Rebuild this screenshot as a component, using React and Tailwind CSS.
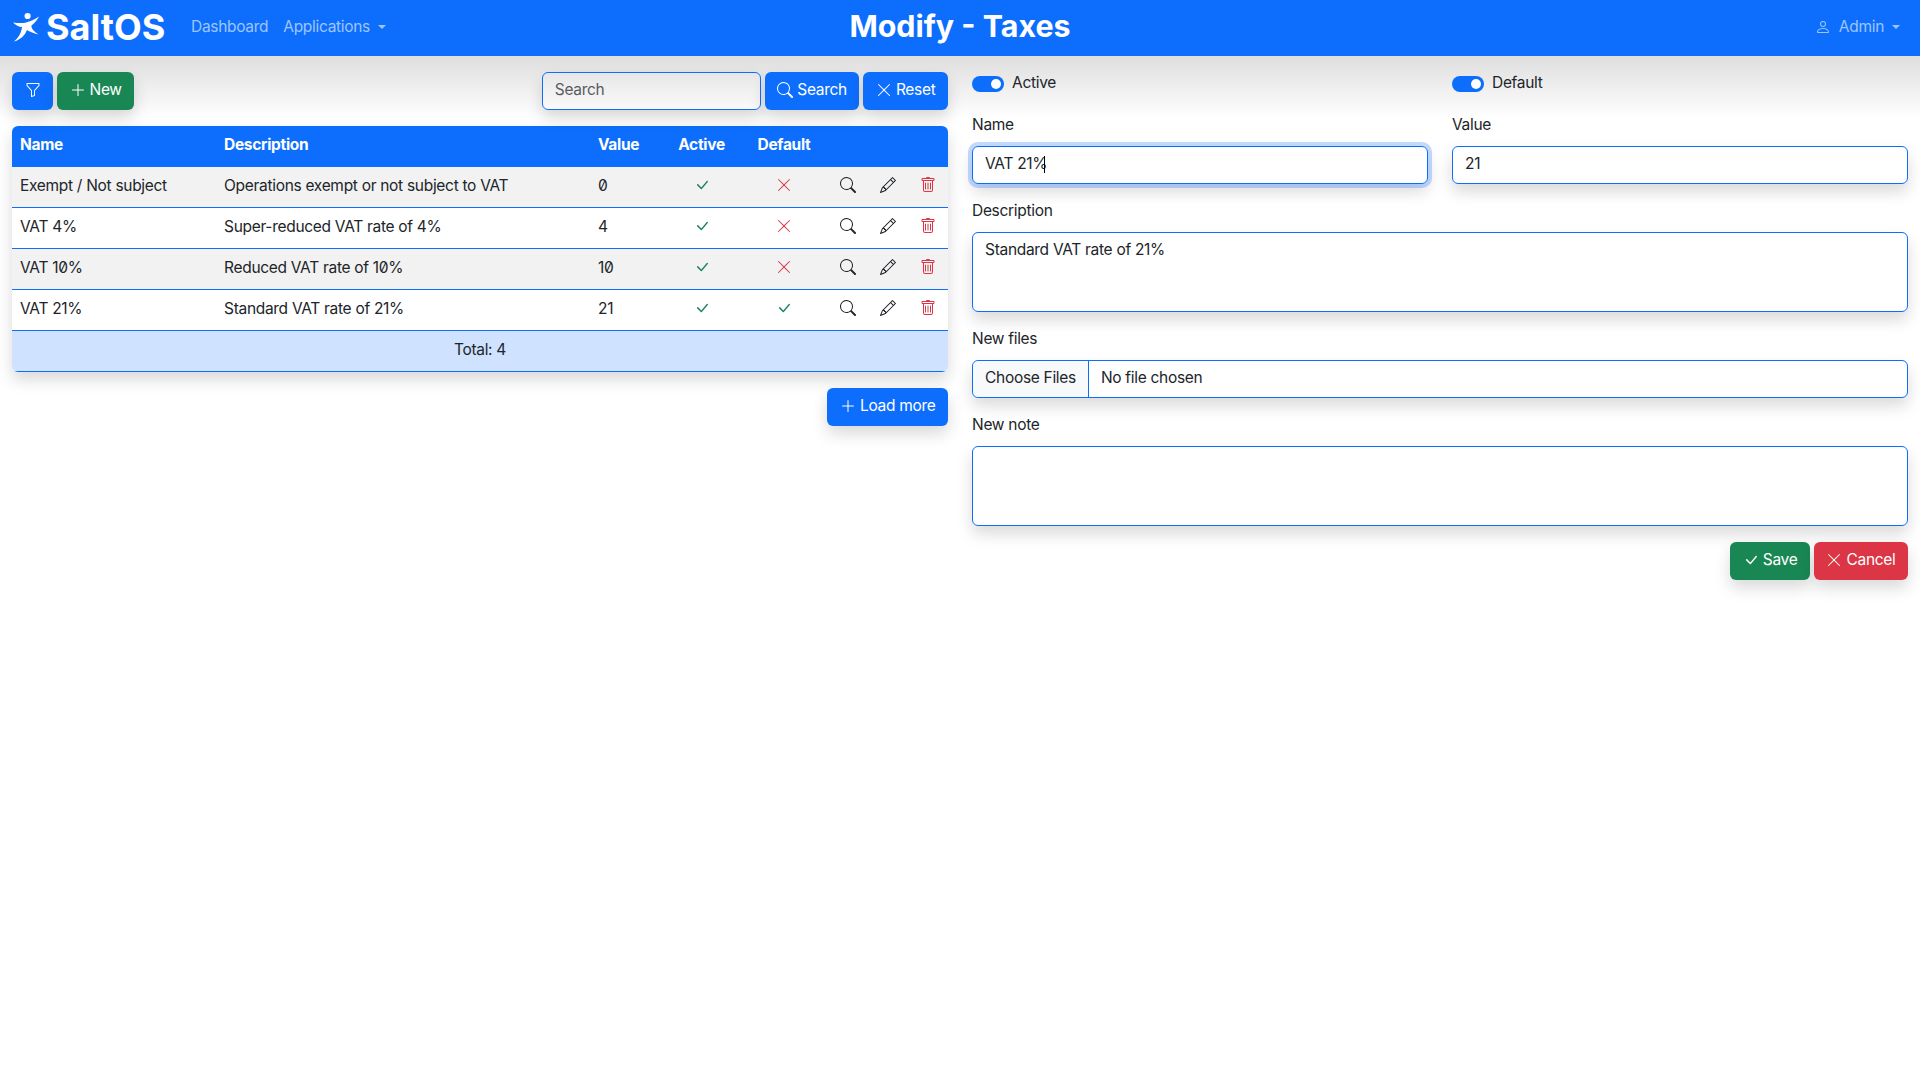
import React from "react";
import { BsFunnel, BsPlusLg, BsSearch, BsXLg, BsCheckLg, BsPencil, BsTrash, BsPerson } from "react-icons/bs";

const rows = [
  { name: "Exempt / Not subject", desc: "Operations exempt or not subject to VAT", value: "0", def: false },
  { name: "VAT 4%", desc: "Super-reduced VAT rate of 4%", value: "4", def: false },
  { name: "VAT 10%", desc: "Reduced VAT rate of 10%", value: "10", def: false },
  { name: "VAT 21%", desc: "Standard VAT rate of 21%", value: "21", def: true },
];

const shadow = "shadow-[0_8px_16px_rgba(0,0,0,0.15)]";

function Btn({ color, icon, children }) {
  return (
    <button className={`h-[38px] px-[12.5px] pb-[2px] rounded-md text-white flex items-center gap-1 shadow-[0_8px_16px_rgba(0,0,0,0.15)] ${color}`}>
      {icon}
      {children}
    </button>
  );
}

function Switch({ label }) {
  return (
    <label className="flex items-center gap-2 h-6">
      <span className="w-8 h-4 rounded-full bg-[#0d6efd] flex items-center justify-end pr-[3px]">
        <span className="w-[10px] h-[10px] rounded-full bg-white" />
      </span>
      <span className="leading-[22px] pb-[2px]">{label}</span>
    </label>
  );
}

function Logo() {
  return (
    <svg width="28" height="30" viewBox="0 0 26 30" fill="white" className="shrink-0">
      <circle cx="14.6" cy="4" r="3.1" />
      <path d="M0 10.5 C5 11 10 11.5 13 10.5 C17 9.5 22 7.5 26 4.5 C24.5 8 21 11.5 18.5 13.5 C18 16 20.5 19 25.5 22.5 C20 21 16.5 19.5 14 18 C12 23 8 27.5 1 29.5 C5.5 26 8.5 20.5 9 15 C6 15 2.5 13 0 10.5 Z" />
    </svg>
  );
}

function Caret() {
  return <span className="block w-0 h-0 border-x-[4.8px] border-t-[4.8px] border-x-transparent border-t-[#9ec5fe]" />;
}

export default function App() {
  return (
    <div className="min-h-[1080px] bg-white text-[#212529] text-[15.5px] tracking-[-0.3px] slashed-zero font-['Inter','Liberation_Sans',sans-serif]">
      <header className="h-14 bg-[#0d6efd] grid grid-cols-[1fr_auto_1fr] items-center px-3">
        <div className="flex items-center">
          <div className="flex items-center gap-[6px] text-white text-[36px] font-bold leading-none w-[179px] pb-[2px] tracking-normal">
            <Logo />
            <span>SaltOS</span>
          </div>
          <nav className="flex items-center text-[#9ec5fe] gap-[15px] pb-[3px]">
            <span>Dashboard</span>
            <span className="flex items-center gap-2">Applications<Caret /></span>
          </nav>
        </div>
        <h1 className="text-center text-white text-[30.4px] font-bold tracking-normal leading-none pb-[4px]">Modify - Taxes</h1>
        <div className="flex items-center justify-end gap-2 text-[#9ec5fe] pb-[3px] pr-2">
          <BsPerson size={16} />
          <span>Admin</span>
          <Caret />
        </div>
      </header>
      <div className="h-[62px] -mb-[62px] bg-gradient-to-b from-[#dedede] to-white" />
      <main className="relative grid grid-cols-2 gap-6 px-3 pt-4">
        <section>
          <div className="flex justify-between">
            <div className="flex gap-1">
              <Btn color="bg-[#0d6efd]" icon={<BsFunnel size={16} />} />
              <Btn color="bg-[#198754]" icon={<BsPlusLg size={16} />}>New</Btn>
            </div>
            <div className="flex gap-1">
              <input placeholder="Search" className={`w-[219px] h-[38px] px-3 pb-[3px] rounded-md border border-[#0d6efd] bg-transparent placeholder:text-[#595c5f] ${shadow}`} />
              <Btn color="bg-[#0d6efd]" icon={<BsSearch size={16} />}>Search</Btn>
              <Btn color="bg-[#0d6efd]" icon={<BsXLg size={16} />}>Reset</Btn>
            </div>
          </div>
          <div className={`mt-4 rounded-md overflow-hidden ${shadow}`}>
            <table className="w-full table-fixed border-separate border-spacing-0">
              <colgroup>
                <col className="w-[204px]" />
                <col className="w-[374px]" />
                <col className="w-[72px]" />
                <col className="w-[79px]" />
                <col className="w-[86px]" />
                <col />
              </colgroup>
              <thead>
                <tr className="h-[41px] bg-[#0d6efd] text-white font-bold">
                  <th className="px-2 pb-[3px] text-left">Name</th>
                  <th className="px-2 pb-[3px] text-left">Description</th>
                  <th className="px-2 pb-[3px] text-left">Value</th>
                  <th className="pb-[3px] text-center">Active</th>
                  <th className="pb-[3px] text-center">Default</th>
                  <th />
                </tr>
              </thead>
              <tbody>
                {rows.map((r, i) => (
                  <tr key={r.name} className={`h-[41px] ${i % 2 === 0 ? "bg-[#f2f2f2]" : "bg-white"}`}>
                    <td className="px-2 pb-[2px] border-b border-[#0d6efd]">{r.name}</td>
                    <td className="px-2 pb-[2px] border-b border-[#0d6efd]">{r.desc}</td>
                    <td className="px-2 pb-[2px] border-b border-[#0d6efd]">{r.value}</td>
                    <td className="pb-[5px] border-b border-[#0d6efd]"><BsCheckLg size={16} className="mx-auto text-[#198754]" /></td>
                    <td className="pb-[5px] border-b border-[#0d6efd]">{r.def ? <BsCheckLg size={16} className="mx-auto text-[#198754]" /> : <BsXLg size={16} className="mx-auto text-[#dc3545]" />}</td>
                    <td className="pb-[5px] border-b border-[#0d6efd]">
                      <div className="flex justify-end">
                        <span className="w-10 flex justify-center"><BsSearch size={16} /></span>
                        <span className="w-10 flex justify-center"><BsPencil size={16} /></span>
                        <span className="w-10 flex justify-center text-[#dc3545]"><BsTrash size={16} /></span>
                      </div>
                    </td>
                  </tr>
                ))}
                <tr className="h-[41px] bg-[#cfe2ff]">
                  <td colSpan={6} className="text-center pb-[2px] border-b border-[#0d6efd]">Total: 4</td>
                </tr>
              </tbody>
            </table>
          </div>
          <div className="flex justify-end mt-4">
            <Btn color="bg-[#0d6efd]" icon={<BsPlusLg size={16} />}>Load more</Btn>
          </div>
        </section>
        <section className="flex flex-col">
          <div className="grid grid-cols-2 gap-6">
            <Switch label="Active" />
            <Switch label="Default" />
          </div>
          <div className="grid grid-cols-2 gap-6 mt-[18px]">
            <div>
              <label className="block mb-2 h-6 leading-[22px]">Name</label>
              <div className="relative">
                <input autoFocus defaultValue="VAT 21%" className="w-full h-[38px] px-3 pb-[3px] rounded-md border border-[#0d6efd] outline-none shadow-[0_0_0_4px_rgba(13,110,253,0.25),0_8px_16px_rgba(0,0,0,0.15)]" />
                <span className="absolute left-[72px] top-[10px] w-px h-[17px] bg-black" />
              </div>
            </div>
            <div>
              <label className="block mb-2 h-6 leading-[22px]">Value</label>
              <input defaultValue="21" className={`w-full h-[38px] px-3 pb-[3px] rounded-md border border-[#0d6efd] outline-none ${shadow}`} />
            </div>
          </div>
          <label className="block mt-[16px] mb-2 h-6 leading-[22px]">Description</label>
          <textarea defaultValue="Standard VAT rate of 21%" className={`block w-full h-[80px] px-3 py-[5px] rounded-md border border-[#0d6efd] outline-none resize-none ${shadow}`} />
          <label className="block mt-[16px] mb-2 h-6 leading-[22px]">New files</label>
          <div className={`flex h-[38px] rounded-md border border-[#0d6efd] items-center bg-white ${shadow}`}>
            <span className="h-full flex items-center px-3 pb-[2px] border-r border-[#0d6efd] bg-[#f8f9fa] rounded-l-md">Choose Files</span>
            <span className="pl-3 pb-[2px]">No file chosen</span>
          </div>
          <label className="block mt-[16px] mb-2 h-6 leading-[22px]">New note</label>
          <textarea className={`block w-full h-[80px] px-3 py-[5px] rounded-md border border-[#0d6efd] outline-none resize-none ${shadow}`} />
          <div className="flex justify-end gap-1 mt-4">
            <Btn color="bg-[#198754]" icon={<BsCheckLg size={16} />}>Save</Btn>
            <Btn color="bg-[#dc3545]" icon={<BsXLg size={16} />}>Cancel</Btn>
          </div>
        </section>
      </main>
    </div>
  );
}
